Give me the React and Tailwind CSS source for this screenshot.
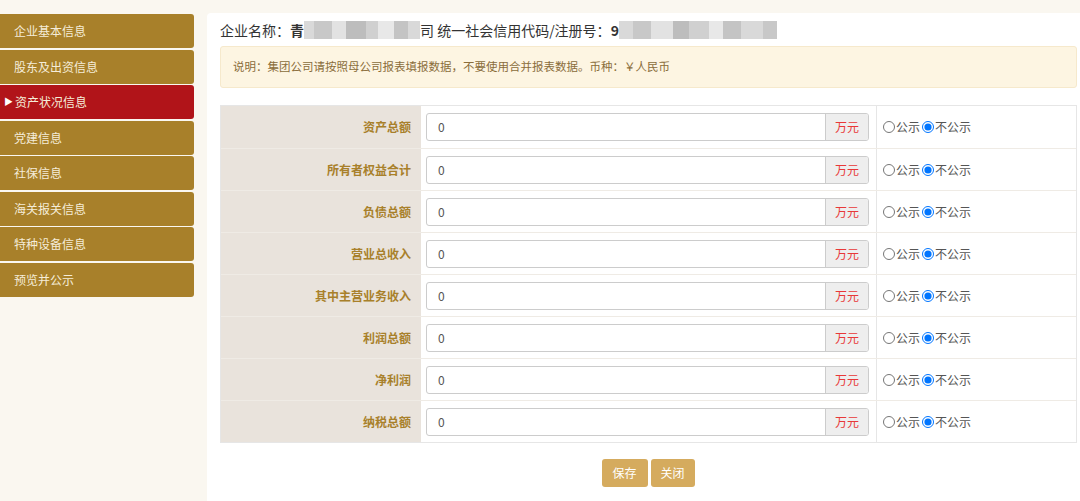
import React from 'react';

const menu = ['企业基本信息', '股东及出资信息', '资产状况信息', '党建信息', '社保信息', '海关报关信息', '特种设备信息', '预览并公示'];
const rows = ['资产总额', '所有者权益合计', '负债总额', '营业总收入', '其中主营业务收入', '利润总额', '净利润', '纳税总额'];

function Blur({ widths }) {
  const tones = ['#d9d9d9', '#c8c8c8', '#e2e2e2', '#bdbdbd', '#d0d0d0', '#e8e8e8', '#c4c4c4'];
  return (
    <span className="inline-flex h-[18px] align-middle">
      {widths.map((w, i) => (
        <span key={i} className="h-full" style={{ width: w, background: tones[i % tones.length] }} />
      ))}
    </span>
  );
}

export default function App() {
  return (
    <div className="w-[1080px] h-[501px] bg-[#faf7f0] flex overflow-hidden" style={{ fontFamily: '"Noto Sans CJK SC", "Noto Sans", sans-serif' }}>
      <div className="w-[194px] pt-[14px] flex flex-col gap-[1.5px] shrink-0">
        {menu.map((m, i) => (
          <div
            key={i}
            className={`h-[34px] flex items-center text-[12px] text-[#f5ecd8] rounded-r-[3px] ${i === 2 ? 'bg-[#b11419] pl-[4px]' : 'bg-[#a8802a] pl-[14px]'}`}
          >
            {i === 2 && <span className="text-[9px] text-white mr-[2px]">▶</span>}
            {m}
          </div>
        ))}
      </div>
      <div className="ml-[13px] mt-[13px] flex-1 bg-white rounded-tl-[4px] pl-[13px] pr-[3px]">
        <div className="h-[33px] flex items-center text-[14px] text-[#333] pt-[1px]">
          <span>企业名称：</span>
          <span className="font-bold">青</span>
          <Blur widths={[10, 18, 14, 20, 12, 16, 14, 12]} />
          <span>司 统一社会信用代码/注册号：</span>
          <span className="font-bold">9</span>
          <Blur widths={[14, 18, 22, 16, 20, 14, 18, 22, 14]} />
        </div>
        <div className="h-[42px] bg-[#fdf5e2] border border-[#f6e9cc] rounded-[3px] flex items-center pl-[12px] text-[11.5px] text-[#8a6d3b]">
          说明：集团公司请按照母公司报表填报数据，不要使用合并报表数据。币种：￥人民币
        </div>
        <div className="mt-[17px] border border-[#e6e6e6]">
          {rows.map((r, i) => (
            <div key={i} className={`flex h-[42px] ${i > 0 ? 'border-t border-[#efebe5]' : ''}`}>
              <div className="w-[200px] bg-[#e9e3dc] flex items-center justify-end pr-[10px] text-[12px] font-bold text-[#a8802a]">
                {r}
              </div>
              <div className="w-[455px] flex items-center pl-[5px] pr-[7px]">
                <div className="flex-1 h-[28px] flex border border-[#cccccc] rounded-[3px] overflow-hidden">
                  <div className="flex-1 flex items-center pl-[11px] text-[12px] text-[#555]">0</div>
                  <div className="w-[43px] border-l border-[#cccccc] bg-[#eeeeee] flex items-center justify-center text-[12px] text-[#e83838]">万元</div>
                </div>
              </div>
              <div className="flex-1 border-l border-[#e6e6e6] flex items-center pl-[6px] text-[12px] text-[#555]">
                <input type="radio" name={`r${i}`} className="w-[12px] h-[12px] m-0 mr-[1px]" />
                <span>公示</span>
                <input type="radio" name={`r${i}`} defaultChecked className="w-[12px] h-[12px] m-0 ml-[2px] mr-[1px]" />
                <span>不公示</span>
              </div>
            </div>
          ))}
        </div>
        <div className="flex justify-center gap-[3px] mt-[16px] pr-[1px]">
          <button className="w-[46px] h-[28px] bg-[#d5ab5e] rounded-[3px] text-white text-[12px]">保存</button>
          <button className="w-[44px] h-[28px] bg-[#d5ab5e] rounded-[3px] text-white text-[12px]">关闭</button>
        </div>
      </div>
    </div>
  );
}
